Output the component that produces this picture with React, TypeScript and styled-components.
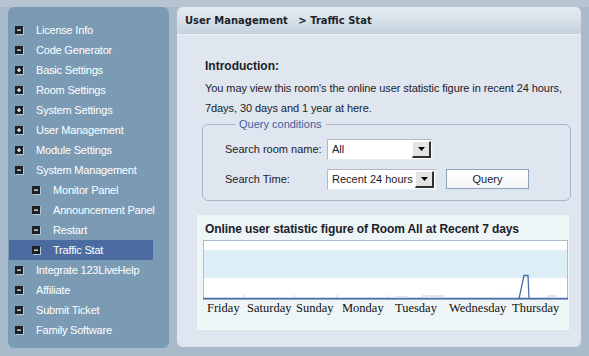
import React from 'react';
import styled, { createGlobalStyle } from 'styled-components';

const GlobalStyle = createGlobalStyle`
  html, body {
    margin: 0;
    padding: 0;
    background: #a9bacb;
  }
  body {
    font-family: "Liberation Sans", Arial, sans-serif;
  }
`;

const Page = styled.div`
  width: 589px;
  height: 356px;
  box-sizing: border-box;
  padding: 7px 8px 0 8px;
  display: flex;
  gap: 8px;
  background: linear-gradient(#b7c5d3 0 7px, #a9bacb 7px);
  overflow: hidden;
`;

const Sidebar = styled.div`
  width: 161px;
  height: 341px;
  box-sizing: border-box;
  background: #7b9bb5;
  border-radius: 6px;
  padding: 13px 0 0 1px;
  display: flex;
  flex-direction: column;
`;

const NavItem = styled.div<{ $level: number; $active?: boolean }>`
  width: 144px;
  height: 20px;
  box-sizing: border-box;
  display: flex;
  align-items: center;
  gap: 12px;
  padding-left: ${p => (p.$level === 0 ? 6 : 23)}px;
  background: ${p => (p.$active ? '#4b6ba1' : 'transparent')};
  color: #ffffff;
  font-size: 11px;
  letter-spacing: -0.2px;
  white-space: nowrap;
`;

const Main = styled.div`
  width: 404px;
  height: 340px;
  background: #dfe6ef;
  border-radius: 6px;
  display: flex;
  flex-direction: column;
  overflow: hidden;
`;

const Header = styled.div`
  height: 28px;
  flex-shrink: 0;
  box-sizing: border-box;
  padding: 0 0 0 8px;
  display: flex;
  align-items: center;
  background: linear-gradient(#e3eaf1 0%, #dbe3eb 40%, #c4d2dd 100%);
  border-bottom: 1px dotted #f4f7fa;
  font-family: "DejaVu Sans", Verdana, sans-serif;
  font-weight: bold;
  font-size: 10px;
  color: #1d232b;
  white-space: pre;
`;

const Content = styled.div`
  padding: 21px 12px 0 20px;
  display: flex;
  flex-direction: column;
`;

const Intro = styled.div`
  padding-left: 8px;
  font-size: 11px;
  line-height: 20px;
  letter-spacing: -0.08px;
  color: #1c2128;
`;

const IntroTitle = styled.div`
  font-weight: bold;
  font-size: 12px;
  letter-spacing: 0;
  margin-bottom: 2px;
`;

const QueryBox = styled.fieldset`
  margin: 0 0 0 5px;
  width: 369px;
  box-sizing: border-box;
  border: 1px solid #a6b6ca;
  border-radius: 6px;
  padding: 4px 0 6px 22px;
  display: flex;
  flex-direction: column;
`;

const Legend = styled.legend`
  margin-left: 10px;
  padding: 0 4px;
  color: #3d5f9f;
  font-size: 11px;
`;

const FormRow = styled.div`
  height: 30px;
  display: flex;
  align-items: center;
  font-size: 11px;
  color: #1c2128;
`;

const FieldLabel = styled.span`
  width: 102px;
  flex-shrink: 0;
`;

const Select = styled.div<{ $width: number }>`
  width: ${p => p.$width}px;
  height: 21px;
  box-sizing: border-box;
  display: flex;
  align-items: stretch;
  background: #ffffff;
  border-top: 1px solid #b4b9c2;
  border-left: 1px solid #b4b9c2;
  border-right: 1px solid #e8ecf2;
  border-bottom: 1px solid #e8ecf2;
`;

const SelectValue = styled.span`
  flex: 1;
  padding-left: 4px;
  display: flex;
  align-items: center;
  font-size: 11px;
`;

const SelectArrow = styled.span`
  width: 16px;
  display: flex;
  align-items: center;
  justify-content: center;
  background: #e4e4e4;
  border-right: 2px solid #303030;
  border-bottom: 2px solid #303030;
  border-top: 1px solid #ffffff;
  border-left: 1px solid #ffffff;
  margin: 1px;
`;

const Button = styled.button`
  margin-left: 10px;
  width: 83px;
  height: 20px;
  background: linear-gradient(#ffffff, #f2f5f9);
  border: 1px solid #8ea2bb;
  font-family: "Liberation Sans", Arial, sans-serif;
  font-size: 11px;
  color: #1c2128;
  padding: 0;
`;

const ChartSection = styled.div`
  margin-top: 14px;
  width: 372px;
  height: 115px;
  box-sizing: border-box;
  background: #eef5f7;
  border-bottom: 1px solid #f7fbfc;
  padding: 7px 0 0 6px;
`;

const ChartTitle = styled.div`
  font-weight: bold;
  font-size: 12px;
  color: #1c2128;
  height: 18px;
  padding-left: 2px;
  letter-spacing: -0.1px;
`;

const Plot = styled.svg`
  display: block;
`;

const DayRow = styled.div`
  display: flex;
  padding-left: 4px;
  margin-top: 1px;
  font-family: "Liberation Serif", "Times New Roman", serif;
  font-size: 12.5px;
  color: #111111;
`;

const Day = styled.span<{ $w: number }>`
  width: ${p => p.$w}px;
  flex-shrink: 0;
  white-space: nowrap;
`;

const NodeIcon = ({ plus }: { plus?: boolean }) => (
  <svg width="9" height="9" viewBox="0 0 9 9" style={{ flexShrink: 0 }}>
    <rect x="1" y="1" width="8" height="8" fill="#b5c6d6" />
    <rect x="0" y="0" width="8" height="8" fill="#1c1f24" />
    <rect x="2" y="3.5" width="4" height="1.2" fill="#ffffff" />
    {plus && <rect x="3.4" y="2" width="1.2" height="4" fill="#ffffff" />}
  </svg>
);

const nav: { label: string; level: number; plus?: boolean; active?: boolean }[] = [
  { label: 'License Info', level: 0 },
  { label: 'Code Generator', level: 0 },
  { label: 'Basic Settings', level: 0, plus: true },
  { label: 'Room Settings', level: 0, plus: true },
  { label: 'System Settings', level: 0, plus: true },
  { label: 'User Management', level: 0, plus: true },
  { label: 'Module Settings', level: 0, plus: true },
  { label: 'System Management', level: 0 },
  { label: 'Monitor Panel', level: 1 },
  { label: 'Announcement Panel', level: 1 },
  { label: 'Restart', level: 1 },
  { label: 'Traffic Stat', level: 1, active: true },
  { label: 'Integrate 123LiveHelp', level: 0 },
  { label: 'Affiliate', level: 0 },
  { label: 'Submit Ticket', level: 0 },
  { label: 'Family Software', level: 0 },
];

const days = [
  { name: 'Friday', w: 40 },
  { name: 'Saturday', w: 49 },
  { name: 'Sunday', w: 46 },
  { name: 'Monday', w: 53 },
  { name: 'Tuesday', w: 54 },
  { name: 'Wednesday', w: 63 },
  { name: 'Thursday', w: 50 },
];

const Arrow = () => (
  <svg width="7" height="4" viewBox="0 0 7 4">
    <path d="M0 0 H7 L3.5 4 Z" fill="#000" />
  </svg>
);

export default function App() {
  return (
    <>
      <GlobalStyle />
      <Page>
        <Sidebar>
          {nav.map(item => (
            <NavItem key={item.label} $level={item.level} $active={item.active}>
              <NodeIcon plus={item.plus} />
              {item.label}
            </NavItem>
          ))}
        </Sidebar>
        <Main>
          <Header>{'User Management   > Traffic Stat'}</Header>
          <Content>
            <Intro>
              <IntroTitle>Introduction:</IntroTitle>
              You may view this room's the online user statistic figure in recent 24 hours,
              <br />
              7days, 30 days and 1 year at here.
            </Intro>
            <QueryBox>
              <Legend>Query conditions</Legend>
              <FormRow>
                <FieldLabel>Search room name:</FieldLabel>
                <Select $width={106}>
                  <SelectValue>All</SelectValue>
                  <SelectArrow><Arrow /></SelectArrow>
                </Select>
              </FormRow>
              <FormRow>
                <FieldLabel>Search Time:</FieldLabel>
                <Select $width={109}>
                  <SelectValue>Recent 24 hours</SelectValue>
                  <SelectArrow><Arrow /></SelectArrow>
                </Select>
                <Button>Query</Button>
              </FormRow>
            </QueryBox>
            <ChartSection>
              <ChartTitle>Online user statistic figure of Room All at Recent 7 days</ChartTitle>
              <Plot width="366" height="60" viewBox="0 0 366 60">
                <rect x="0.5" y="0.5" width="364" height="59" fill="#ffffff" stroke="#a9bad2" />
                <rect x="1" y="10" width="363" height="28" fill="#deeef6" />
                <line x1="0" y1="58.5" x2="365" y2="58.5" stroke="#4a6fa6" strokeWidth="1.5" />
                {[41, 91, 134, 186, 241, 301].map(x => (
                  <line key={x} x1={x} y1="55" x2={x} y2="58" stroke="#c9d4e2" />
                ))}
                <rect x="191" y="56" width="14" height="1.5" fill="#dfe8f1" />
                <rect x="219" y="55" width="23" height="2" fill="#dfe8f1" />
                <rect x="344" y="55" width="10" height="2" fill="#dfe8f1" />
                <path d="M316 58.5 L321 35.5 L325 35.5 L326 58.5" fill="none" stroke="#4a6fa6" strokeWidth="1.3" />
              </Plot>
              <DayRow>
                {days.map(d => (
                  <Day key={d.name} $w={d.w}>{d.name}</Day>
                ))}
              </DayRow>
            </ChartSection>
          </Content>
        </Main>
      </Page>
    </>
  );
}
